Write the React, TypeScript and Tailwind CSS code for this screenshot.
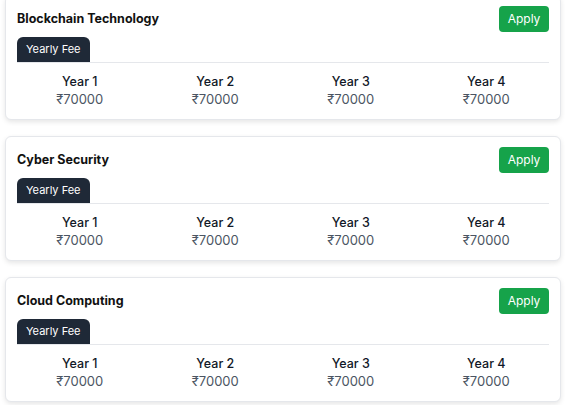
const programs = ['Blockchain Technology', 'Cyber Security', 'Cloud Computing'];
const years = ['Year 1', 'Year 2', 'Year 3', 'Year 4'];

function FeeCard({ name }: { name: string }) {
  return (
    <div className="bg-white border border-gray-200 rounded-md shadow-[0_2px_5px_rgba(0,0,0,0.1)] px-[11px] pt-[10px] pb-[11px]">
      {/* Header */}
      <div className="flex items-center justify-between h-[26px]">
        <h2 className="text-[12.5px] font-bold text-[#111111]">{name}</h2>
        <button className="h-[26px] w-[50px] rounded bg-[#16a34a] text-white text-[12px]">Apply</button>
      </div>

      {/* Tabs */}
      <div className="mt-[5px] flex border-b border-gray-200">
        <div className="h-[25px] px-[9px] flex items-center rounded-t-md bg-[#1f2937] text-white text-[11px]">
          Yearly Fee
        </div>
      </div>

      {/* Fees */}
      <div className="grid grid-cols-4 gap-[10px] pt-[10px] text-center">
        {years.map(y => (
          <div key={y}>
            <div className="text-[12.5px] leading-[18px] font-medium text-[#111827]">{y}</div>
            <div className="text-[13px] leading-[17px] text-[#4b5563]">₹70000</div>
          </div>
        ))}
      </div>
    </div>
  );
}

export default function App() {
  return (
    <div className="bg-white min-h-[410px] font-['Inter',sans-serif]">
      <div className="-mt-[5px] ml-[5px] w-[556px] flex flex-col gap-4">
        {programs.map(p => (
          <FeeCard key={p} name={p} />
        ))}
      </div>
    </div>
  );
}
